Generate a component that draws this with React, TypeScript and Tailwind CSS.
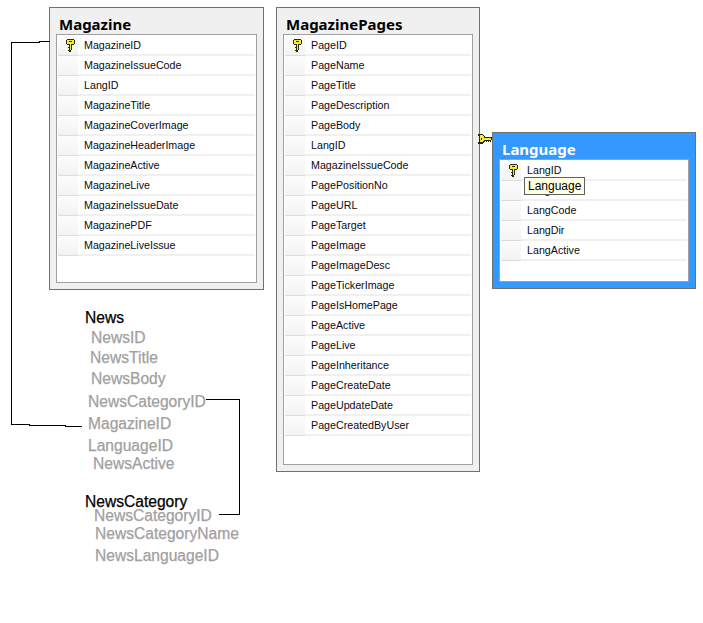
const KeyIcon = () => (
  <svg width="9" height="13" viewBox="0 0 9 13" shapeRendering="crispEdges">
    <path d="M1 0h7v1h1v4H8v1H6v5H5v2H3v-1H2v-1h1V9H2V8h1V6H1V5H0V1h1z" fill="#2a2a00" />
    <path d="M1 1h7v4H5v6H4V5H1z" fill="#f7ea3c" />
    <path d="M3 2h3v1H3z" fill="#2a2a00" />
  </svg>
);

const FKConnector = () => (
  <svg width="14" height="10" viewBox="0 0 14 10" shapeRendering="crispEdges">
    <path d="M0 0h5v1h1v1h1v1h7v3h-1v2h-1V7h-1v1h-1V7H9v1H8V7H7v1H6v1H5v1H0V8h1V2H0z" fill="#2a2a00" />
    <path d="M2 1h3v1h1v2h7v2H6v1H5v1H2z" fill="#f7ea3c" />
    <path d="M3 4h1v2H3z" fill="#2a2a00" />
  </svg>
);

function Row({ name, isKey }: { name: string; isKey?: boolean }) {
  return (
    <div className="flex h-5 border-b-2 border-[#f0f0f0]">
      <div className="w-[20px] shrink-0 flex items-start justify-center pt-[3px] pl-[4px] bg-[linear-gradient(#fcfcfc,#f3f3f5)] border-b border-[#dcdcdc] -mb-0.5">
        {isKey && <KeyIcon />}
      </div>
      <div className="pl-[6px] text-[10.7px] leading-[18px] text-[#0a0a14] whitespace-nowrap font-['Liberation_Sans',sans-serif]">
        {name}
      </div>
    </div>
  );
}

function TableCard({
  title,
  rows,
  className,
  selected,
}: {
  title: string;
  rows: string[];
  className: string;
  selected?: boolean;
}) {
  return (
    <div
      className={`absolute border border-[#707070] flex flex-col px-[6px] pb-[6px] ${className} ${
        selected ? "bg-[#3399ff]" : "bg-[#f0f0f0]"
      }`}
    >
      <div
        className={`h-[26px] shrink-0 pl-[3px] pt-[6px] text-[15px] leading-[20px] font-bold whitespace-nowrap font-['Noto_Sans',sans-serif] ${
          selected ? "text-white" : "text-black"
        }`}
      >
        {title}
      </div>
      <div className="flex-1 border border-[#a0a0a0] bg-white px-px pt-px">
        {rows.map((r, i) => (
          <Row key={r} name={r} isKey={i === 0} />
        ))}
      </div>
    </div>
  );
}

const magazineRows = [
  "MagazineID",
  "MagazineIssueCode",
  "LangID",
  "MagazineTitle",
  "MagazineCoverImage",
  "MagazineHeaderImage",
  "MagazineActive",
  "MagazineLive",
  "MagazineIssueDate",
  "MagazinePDF",
  "MagazineLiveIssue",
];

const pageRows = [
  "PageID",
  "PageName",
  "PageTitle",
  "PageDescription",
  "PageBody",
  "LangID",
  "MagazineIssueCode",
  "PagePositionNo",
  "PageURL",
  "PageTarget",
  "PageImage",
  "PageImageDesc",
  "PageTickerImage",
  "PageIsHomePage",
  "PageActive",
  "PageLive",
  "PageInheritance",
  "PageCreateDate",
  "PageUpdateDate",
  "PageCreatedByUser",
];

// second row sits under the tooltip, only its descender shows
const langRows = ["LangID", "LangName", "LangCode", "LangDir", "LangActive"];

// hand-placed labels of the pasted-in tables, they don't sit on a grid in the picture
const looseLabels = [
  { text: "News", cls: "left-[85px] top-[308px] text-black" },
  { text: "NewsID", cls: "left-[91px] top-[328px] text-[#a0a0a0]" },
  { text: "NewsTitle", cls: "left-[90px] top-[348px] text-[#a0a0a0]" },
  { text: "NewsBody", cls: "left-[91px] top-[369px] text-[#a0a0a0]" },
  { text: "NewsCategoryID", cls: "left-[88px] top-[392px] text-[#a0a0a0]" },
  { text: "MagazineID", cls: "left-[88px] top-[414px] text-[#a0a0a0]" },
  { text: "LanguageID", cls: "left-[88px] top-[436px] text-[#a0a0a0]" },
  { text: "NewsActive", cls: "left-[93px] top-[454px] text-[#a0a0a0]" },
  { text: "NewsCategory", cls: "left-[85px] top-[492px] text-black" },
  { text: "NewsCategoryID", cls: "left-[94px] top-[506px] text-[#a0a0a0]" },
  { text: "NewsCategoryName", cls: "left-[95px] top-[524px] text-[#a0a0a0]" },
  { text: "NewsLanguageID", cls: "left-[95px] top-[546px] text-[#a0a0a0]" },
];

export default function App() {
  return (
    <div className="relative w-[703px] h-[623px] bg-white overflow-hidden font-['Liberation_Sans',sans-serif]">
      <TableCard title="Magazine" rows={magazineRows} className="left-[49px] top-[7px] w-[215px] h-[283px]" />
      <TableCard title="MagazinePages" rows={pageRows} className="left-[276px] top-[7px] w-[204px] h-[465px]" />
      <TableCard title="Language" rows={langRows} selected className="left-[492px] top-[132px] w-[204px] h-[157px]" />

      <div className="absolute left-[478px] top-[134px]">
        <FKConnector />
      </div>

      <div className="absolute left-[524px] top-[177px] h-[18px] px-[3px] border border-[#606060] bg-[#ffffe1] text-[12px] leading-[16px] text-black">
        Language
      </div>

      {looseLabels.map((l) => (
        <div
          key={l.text + l.cls}
          className={`absolute text-[15.6px] leading-[20px] whitespace-nowrap [-webkit-text-stroke:0.25px] ${l.cls}`}
        >
          {l.text}
        </div>
      ))}

      <svg className="absolute left-0 top-0" width="703" height="623" shapeRendering="crispEdges" fill="none" stroke="#000">
        <path d="M49.5 41.5H39.5V42.5H11.5V424.5H29.5V425.5H65.5V426.5H82" />
        <path d="M206 399.5H239.5V514.5H219" />
      </svg>
    </div>
  );
}
